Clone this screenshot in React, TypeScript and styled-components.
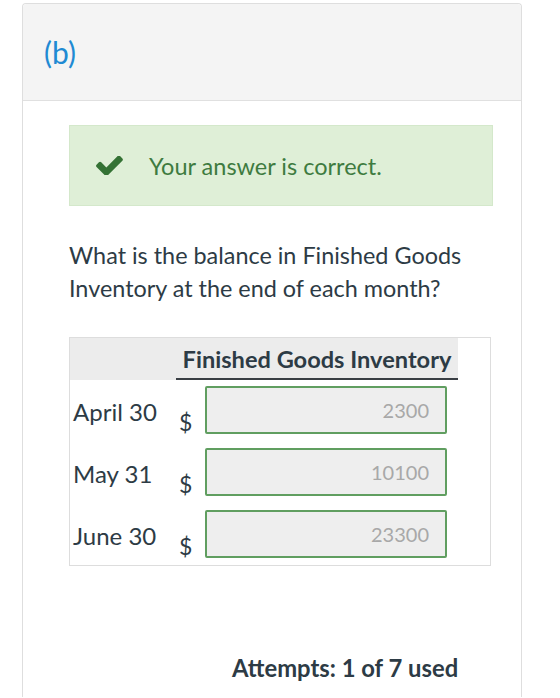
import React from 'react';
import styled, { createGlobalStyle } from 'styled-components';

const GlobalStyle = createGlobalStyle`
  html, body {
    margin: 0;
    padding: 0;
    background: #ffffff;
  }
  body {
    font-family: Lato, 'Open Sans', Arial, sans-serif;
    color: #2d3b45;
  }
`;

const Card = styled.div`
  margin: 3px 0 0 22px;
  width: 500px;
  border: 1px solid #dedede;
  border-bottom: 0;
  border-radius: 4px 4px 0 0;
  min-height: 694px;
  box-sizing: border-box;
`;

const CardHead = styled.div`
  height: 96px;
  display: flex;
  align-items: center;
  padding-left: 21px;
  background: #f4f4f4;
  border-bottom: 1px solid #e0e0e0;
  border-radius: 4px 4px 0 0;
  font-size: 30px;
  color: #1f8ad3;
`;

const CardBody = styled.div`
  padding: 24px 0 0 46px;
`;

const Notice = styled.div`
  width: 424px;
  height: 81px;
  box-sizing: border-box;
  display: flex;
  align-items: center;
  padding-left: 26px;
  gap: 26px;
  background: #dfefd7;
  border: 1px solid #d4e8cb;
  color: #3e7b40;
  font-size: 23.5px;
`;

const CheckIcon = styled.svg`
  width: 27px;
  height: 19px;
  fill: #347234;
  flex-shrink: 0;
`;

const Question = styled.p`
  margin: 33px 0 0;
  width: 430px;
  font-size: 23.4px;
  line-height: 33px;
  color: #2d3b45;
`;

const TableBox = styled.div`
  margin-top: 32px;
  width: 422px;
  box-sizing: border-box;
  border: 1px solid #dddddd;
  padding-bottom: 7px;
`;

const HeadRow = styled.div`
  display: flex;
  width: 388px;
  height: 42px;
  background: #ececec;
`;

const HeadTitle = styled.div`
  margin-left: 106px;
  flex: 1;
  box-sizing: border-box;
  border-bottom: 2px solid #3a3f44;
  display: flex;
  align-items: center;
  justify-content: center;
  padding-top: 1px;
  font-size: 23.6px;
  font-weight: 700;
  color: #2d3b45;
`;

const Rows = styled.div`
  display: grid;
  grid-template-columns: 106px 29px 242px;
  row-gap: 14px;
  padding-top: 6px;
`;

const RowLabel = styled.div`
  display: flex;
  align-items: center;
  padding: 2px 0 0 3px;
  font-size: 24px;
  color: #2d3b45;
`;

const Currency = styled.div`
  display: flex;
  align-items: flex-end;
  padding-left: 3px;
  font-size: 23px;
  line-height: 24px;
  color: #2d3b45;
`;

const Amount = styled.div`
  height: 48px;
  box-sizing: border-box;
  display: flex;
  align-items: center;
  justify-content: flex-end;
  padding-right: 16px;
  background: #eeeeee;
  border: 2px solid #609e60;
  border-radius: 2px;
  font-size: 20px;
  color: #a8a8a8;
`;

const Attempts = styled.div`
  margin-top: 88px;
  padding-left: 163px;
  font-size: 23.8px;
  font-weight: 700;
  color: #2d3b45;
`;

const balances = [
  { month: 'April 30', value: '2300' },
  { month: 'May 31', value: '10100' },
  { month: 'June 30', value: '23300' },
];

const App: React.FC = () => {
  return (
    <>
      <GlobalStyle />
      <Card>
        <CardHead>(b)</CardHead>
        <CardBody>
          <Notice>
            <CheckIcon viewBox="125 360 1546 1098">
              <path d="M1671 566q0 40-28 68l-724 724-136 136q-28 28-68 28t-68-28l-136-136-362-362q-28-28-28-68t28-68l136-136q28-28 68-28t68 28l294 295 656-657q28-28 68-28t68 28l136 136q28 28 28 68z" />
            </CheckIcon>
            Your answer is correct.
          </Notice>
          <Question>
            What is the balance in Finished Goods Inventory at the end of each
            month?
          </Question>
          <TableBox>
            <HeadRow>
              <HeadTitle>Finished Goods Inventory</HeadTitle>
            </HeadRow>
            <Rows>
              {balances.map((row) => (
                <React.Fragment key={row.month}>
                  <RowLabel>{row.month}</RowLabel>
                  <Currency>$</Currency>
                  <Amount>{row.value}</Amount>
                </React.Fragment>
              ))}
            </Rows>
          </TableBox>
          <Attempts>Attempts: 1 of 7 used</Attempts>
        </CardBody>
      </Card>
    </>
  );
};

export default App;
